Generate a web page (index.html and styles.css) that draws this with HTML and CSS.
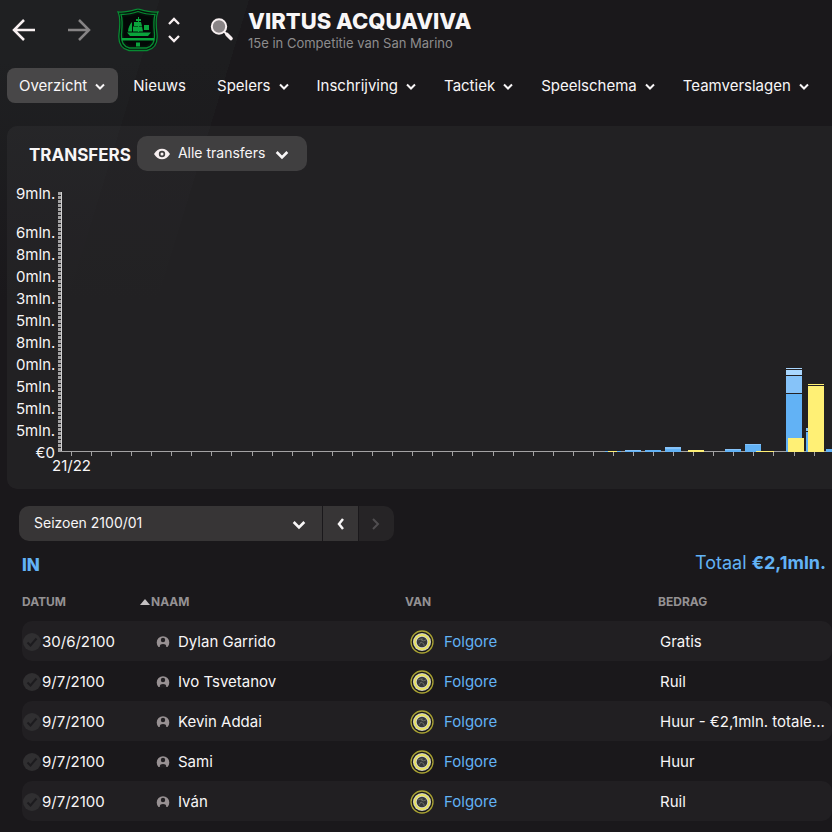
FILE: index.html
```html
<!DOCTYPE html>
<html lang="nl">
<head>
  <meta charset="UTF-8" />
  <meta name="viewport" content="width=device-width, initial-scale=1" />
  <title>Virtus Acquaviva - Transfers</title>
  <link rel="stylesheet" href="styles.css">
</head>
<body>
  <!-- shared icons -->
  <svg class="sprite" aria-hidden="true">
    <symbol id="chevron" viewBox="0 0 12 12"><path d="M2 4.500l4 4 4-4" fill="none" stroke="currentColor" stroke-width="2"/></symbol>
    <symbol id="check" viewBox="0 0 18 18"><circle cx="9" cy="9" r="9" fill="#302f31"/><path d="M4.500 9.500l3 3 6-7" fill="none" stroke="#1c1b1e" stroke-width="2"/></symbol>
    <symbol id="person" viewBox="0 0 14 14"><path d="M2.500 12A6.300 6.300 0 1 1 11.500 12z" fill="#989193"/><circle cx="7" cy="5" r="2.200" fill="#211f22"/><path d="M3.800 12.500V11Q4 9 7 9t3.200 2v1.500z" fill="#211f22"/></symbol>
    <symbol id="folgore" viewBox="0 0 24 24">
      <circle cx="12" cy="12" r="11" fill="#17161a" stroke="#a9a233" stroke-width="1.300"/>
      <circle cx="12" cy="12" r="9" fill="#d5d3b8"/>
      <circle cx="12" cy="12" r="7" fill="#d5d3c6" stroke="#e9e251" stroke-width="1.500"/>
      <circle cx="12" cy="12" r="5.300" fill="#363839"/>
      <path d="M8 10l3-1 2 2 3-1M9 15l2-3 3 2M12 8v3M14 14v2" fill="none" stroke="#73766f" stroke-width=".8"/>
    </symbol>
  </svg>

  <header class="header">
    <button class="icon-btn back" aria-label="Terug">
      <svg width="24" height="24" viewBox="0 0 24 24"><path d="M23 12H3M12 2L2 12l10 10" fill="none" stroke="currentColor" stroke-width="2.500"/></svg>
    </button>
    <button class="icon-btn forward" aria-label="Vooruit">
      <svg width="24" height="24" viewBox="0 0 24 24"><path d="M1 12h20M12 2l10 10-10 10" fill="none" stroke="currentColor" stroke-width="2.500"/></svg>
    </button>
    <svg class="crest" width="42" height="44" viewBox="0 0 42 44">
      <path d="M1 4C8 5 14 3 21 1c7 2 13 4 20 3-3 6-2 14-1 22 1 10-3 15-10 16.500H12C5 41 1 36 2 26 3 18 4 10 1 4z" fill="#06110b" stroke="#078a32" stroke-width="1.300"/>
      <path d="M4 6.500c7 0 12-1 17-3 5 2 10 3 17 3-2 7-1 14-.5 20 .5 8-2 12-8 13.500h-17C6 38.500 4 34 4.500 26.500 5 20 6 13 4 6.500z" fill="none" stroke="#078a32" stroke-width="1.300"/>
      <path d="M6.500 9C12 8.500 17 7.500 21 6c4 1.500 9 2.500 14.500 3-1 6-1 11-.5 18 .3 6-2 9.500-7 10.500H14c-5-1-7-4.500-7-10.500.5-7 .5-12-.5-18z" fill="#030806"/>
      <path d="M5 30h32v2.500H5zM19 34.500h4v4h-4z" fill="#0aa53c"/>
      <path d="M10 24.500h24l-3 3.500H13zM15 14c-2 2-4 6-4 9.500h4zM19 11h5v2h-5zM17 14h7l1 4h-8zM16 18.500h9l1 5H16zM27 17h5v5h-5zM21 9h1v15h-1z" fill="#0aa53c"/>
    </svg>
    <div class="switcher">
      <button class="icon-btn" aria-label="Vorige club"><svg width="14" height="10" viewBox="0 0 14 10"><path d="M2 8l5-5 5 5" fill="none" stroke="currentColor" stroke-width="2.300"/></svg></button>
      <button class="icon-btn" aria-label="Volgende club"><svg width="14" height="10" viewBox="0 0 14 10"><path d="M2 2l5 5 5-5" fill="none" stroke="currentColor" stroke-width="2.300"/></svg></button>
    </div>
    <button class="icon-btn search" aria-label="Zoeken">
      <svg width="24" height="24" viewBox="0 0 24 24"><circle cx="9" cy="8.500" r="7.200" fill="#898486" stroke="#f8f0f1" stroke-width="2"/><path d="M14 13.500l3 3" stroke="#f8f0f1" stroke-width="2"/><path d="M17 16.500l4 4" stroke="#f8f0f1" stroke-width="3.600" stroke-linecap="round"/></svg>
    </button>
    <div class="club">
      <h1>VIRTUS ACQUAVIVA</h1>
      <p>15e in Competitie van San Marino</p>
    </div>
  </header>

  <nav class="tabs">
    <button class="tab active">Overzicht <svg class="chev"><use href="#chevron"/></svg></button>
    <button class="tab plain">Nieuws</button>
    <button class="tab">Spelers <svg class="chev"><use href="#chevron"/></svg></button>
    <button class="tab">Inschrijving <svg class="chev"><use href="#chevron"/></svg></button>
    <button class="tab">Tactiek <svg class="chev"><use href="#chevron"/></svg></button>
    <button class="tab">Speelschema <svg class="chev"><use href="#chevron"/></svg></button>
    <button class="tab">Teamverslagen <svg class="chev"><use href="#chevron"/></svg></button>
  </nav>

  <section class="panel">
    <div class="panel-head">
      <h2>TRANSFERS</h2>
      <div class="filter">
        <svg width="16" height="12" viewBox="0 0 16 12"><path d="M0 6C4-1 12-1 16 6 12 13 4 13 0 6z" fill="#f8f0f1"/><circle cx="8" cy="6" r="3.200" fill="#403f40"/><circle cx="8" cy="6" r="1.500" fill="#f8f0f1"/></svg>
        <select aria-label="Transfers filteren">
          <option>Alle transfers</option>
        </select>
        <svg class="select-chev"><use href="#chevron"/></svg>
      </div>
    </div>
    <div class="chart">
      <ul class="y-labels">
        <li class="top">9mln.</li>
        <li>6mln.</li>
        <li>8mln.</li>
        <li>0mln.</li>
        <li>3mln.</li>
        <li>5mln.</li>
        <li>8mln.</li>
        <li>0mln.</li>
        <li>5mln.</li>
        <li>5mln.</li>
        <li>5mln.</li>
        <li>€0</li>
      </ul>
      <div class="plot">
        <svg class="bars" role="img" aria-label="Transfers per seizoen">
          <defs>
            <pattern id="y-ticks" width="3" height="4" patternUnits="userSpaceOnUse"><rect width="3" height="3" fill="#a3a2a3"/></pattern>
          </defs>
          <rect width="3" height="260" fill="url(#y-ticks)"/>
          <path d="M3 0h1v259h-1z" fill="#d2d1d2"/>
          <path d="M0 259h2000v1H0z" fill="#a3a2a3"/>
          <path d="M13.500 260v4m20-4v4m20-4v4m20-4v4m20-4v4m20-4v4m20-4v4m20-4v4m20-4v4m21-4v4m20-4v4m20-4v4m20-4v4m20-4v4m20-4v4m20-4v4m20-4v4m20-4v4m20-4v4m20-4v4m20-4v4m21-4v4m20-4v4m20-4v4m20-4v4m20-4v4m20-4v4m20-4v4m20-4v4m20-4v4m20-4v4m20-4v4m20-4v4m20-4v4m20-4v4m20-4v4m21-4v4m20-4v4" fill="none" stroke="#a3a2a3"/>
          <!-- incoming: blue -->
          <path d="M547 259h16v1h-16zM567 258h16v2h-16zM587 258h16v2h-16zM607 257h16v3h-16zM667 258h16v2h-16zM687 253h16v7h-16zM728 202h16v58h-16zM748 240h16v20h-16zM768 257h16v3h-16z" fill="#62b2f5"/>
          <path d="M567 258h16v1h-16zM607 255h16v2h-16zM667 257h16v1h-16zM687 252h16v1h-16zM728 184h16v17h-16zM748 236h16v3h-16z" fill="#86c3f9"/>
          <path d="M728 178h16v5h-16zM728 176h16v1h-16z" fill="#a9d7ff"/>
          <!-- outgoing: yellow -->
          <path d="M630 258h16v2h-16zM550 259h9v1h-9zM698 259h18v1h-18zM730 246h16v14h-16zM750 192h16v1h-16zM750 194h16v66h-16z" fill="#fff075"/>
          <path d="M728 177h16v1h-16zM728 183h16v1h-16zM728 201h16v1h-16zM750 193h16v1h-16z" fill="#232124"/>
        </svg>
        <span class="x-label">21/22</span>
      </div>
    </div>
  </section>

  <section class="season">
    <div class="season-bar">
      <div class="season-pick">
        <select aria-label="Seizoen">
          <option>Seizoen 2100/01</option>
        </select>
        <svg class="select-chev"><use href="#chevron"/></svg>
      </div>
      <button class="step" aria-label="Vorig seizoen"><svg width="12" height="14" viewBox="0 0 12 14"><path d="M8 2L4 7l4 5" fill="none" stroke="currentColor" stroke-width="2.500"/></svg></button>
      <button class="step next" aria-label="Volgend seizoen" disabled><svg width="12" height="14" viewBox="0 0 12 14"><path d="M2 2l5 5-5 5" fill="none" stroke="currentColor" stroke-width="2"/></svg></button>
    </div>
    <div class="summary">
      <h3>IN</h3>
      <p>Totaal <strong>€2,1mln.</strong></p>
    </div>
    <table class="transfers">
      <thead>
        <tr>
          <th class="date">DATUM</th>
          <th class="name" aria-sort="ascending"><svg width="10" height="6" viewBox="0 0 10 6"><path d="M0 6l5-6 5 6z" fill="#c4c0c2"/></svg>NAAM</th>
          <th class="from">VAN</th>
          <th class="fee">BEDRAG</th>
        </tr>
      </thead>
      <tbody>
        <tr>
          <td><div class="cell"><svg class="check"><use href="#check"/></svg>30/6/2100</div></td>
          <td><div class="cell player"><svg class="person"><use href="#person"/></svg>Dylan Garrido</div></td>
          <td><div class="cell team"><svg class="badge"><use href="#folgore"/></svg><a href="#">Folgore</a></div></td>
          <td class="amount">Gratis</td>
        </tr>
        <tr>
          <td><div class="cell"><svg class="check"><use href="#check"/></svg>9/7/2100</div></td>
          <td><div class="cell player"><svg class="person"><use href="#person"/></svg>Ivo Tsvetanov</div></td>
          <td><div class="cell team"><svg class="badge"><use href="#folgore"/></svg><a href="#">Folgore</a></div></td>
          <td class="amount">Ruil</td>
        </tr>
        <tr>
          <td><div class="cell"><svg class="check"><use href="#check"/></svg>9/7/2100</div></td>
          <td><div class="cell player"><svg class="person"><use href="#person"/></svg>Kevin Addai</div></td>
          <td><div class="cell team"><svg class="badge"><use href="#folgore"/></svg><a href="#">Folgore</a></div></td>
          <td class="amount">Huur - €2,1mln. totale...</td>
        </tr>
        <tr>
          <td><div class="cell"><svg class="check"><use href="#check"/></svg>9/7/2100</div></td>
          <td><div class="cell player"><svg class="person"><use href="#person"/></svg>Sami</div></td>
          <td><div class="cell team"><svg class="badge"><use href="#folgore"/></svg><a href="#">Folgore</a></div></td>
          <td class="amount">Huur</td>
        </tr>
        <tr>
          <td><div class="cell"><svg class="check"><use href="#check"/></svg>9/7/2100</div></td>
          <td><div class="cell player"><svg class="person"><use href="#person"/></svg>Iván</div></td>
          <td><div class="cell team"><svg class="badge"><use href="#folgore"/></svg><a href="#">Folgore</a></div></td>
          <td class="amount">Ruil</td>
        </tr>
      </tbody>
    </table>
  </section>
</body>
</html>
```
FILE: styles.css
```css
* {
  box-sizing: border-box;
}
body {
  margin: 0;
  background-color: #1a181b;
  background-image:
    linear-gradient(rgba(26, 24, 27, 0) 60px, #1a181b 300px),
    linear-gradient(107deg, #1f2022 0, #1f2022 32%, #1d1d1f 32%, #1d1d1f 50%, #1a181b 50%);
  background-repeat: no-repeat;
  background-size: 400px 320px;
  color: #f8f6f7;
  font-family: Inter, "Liberation Sans", sans-serif;
  font-size: 15px;
  line-height: 20px;
}
h1, h2, h3, p, ul {
  margin: 0;
  padding: 0;
}
button, select {
  font: inherit;
  color: inherit;
  background: none;
  border: 0;
  padding: 0;
  cursor: pointer;
}
select {
  appearance: none;
}
svg {
  display: block;
  flex: none;
}
.sprite {
  position: absolute;
  width: 0;
  height: 0;
}

/* top bar */
.header {
  display: flex;
  align-items: center;
  height: 60px;
  padding-left: 12px;
}
.icon-btn {
  color: #f8f0f1;
}
.forward {
  color: #868485;
  margin-left: 31px;
}
.crest {
  margin-left: 26px;
}
.switcher {
  display: flex;
  flex-direction: column;
  gap: 8px;
  margin-left: 8px;
}
.search {
  margin-left: 29px;
}
.club {
  margin-left: 14px;
  padding-top: 2px;
}
.club h1 {
  font-size: 22px;
  line-height: 24px;
  font-weight: 800;
}
.club p {
  font-size: 13px;
  color: #8d8c8d;
}

/* tabs */
.tabs {
  display: flex;
  gap: 3px;
  padding: 8px 7px 0;
}
.tab {
  display: flex;
  align-items: center;
  gap: 7px;
  height: 35px;
  padding: 0 12px;
  border-radius: 8px;
  white-space: nowrap;
}
.tab.plain {
  padding-right: 16px;
}
.tab.active {
  background: #484748;
}
.chev {
  width: 12px;
  height: 12px;
}

/* chart panel */
.panel {
  margin: 23px 0 0 7px;
  height: 363px;
  background: rgba(255, 255, 255, 0.04);
  border-radius: 10px 0 0 10px;
}
.panel-head {
  display: flex;
  align-items: center;
  gap: 6px;
  padding: 10px 0 0 22px;
}
.panel-head h2 {
  padding-top: 2px;
  font-size: 17px;
  font-weight: 700;
}
.filter {
  display: flex;
  align-items: center;
  gap: 8px;
  height: 35px;
  padding: 0 17px;
  background: #403f40;
  border-radius: 10px;
  font-size: 14px;
}
.filter select, .season-pick select {
  padding-bottom: 2px;
}
.select-chev {
  width: 16px;
  height: 16px;
  pointer-events: none;
}
.chart {
  display: flex;
  padding: 12px 0 0 9px;
}
.y-labels {
  width: 39px;
  list-style: none;
  text-align: right;
  line-height: 22px;
  white-space: nowrap;
}
.y-labels .top {
  margin-bottom: 17px;
}
.plot {
  flex: 1;
  min-width: 0;
  margin-left: 3px;
  padding-top: 9px;
}
.bars {
  width: 100%;
  height: 264px;
}
.x-label {
  display: inline-block;
  margin-left: -6px;
}

/* season selector */
.season {
  padding: 17px 0 0 19px;
}
.season-bar {
  display: flex;
  gap: 1px;
}
.season-pick {
  display: flex;
  align-items: center;
  width: 303px;
  height: 35px;
  padding: 0 15px;
  background: #373536;
  border-radius: 10px 0 0 10px;
  font-size: 14px;
}
.season-pick select {
  flex: 1;
}
.step {
  display: flex;
  align-items: center;
  justify-content: center;
  width: 35px;
  height: 35px;
  background: #373536;
}
.step.next {
  background: #262426;
  color: #504e50;
  border-radius: 0 10px 10px 0;
}
.summary {
  display: flex;
  align-items: center;
  justify-content: space-between;
  height: 44px;
  padding: 0 6px 0 3px;
  color: #62b2f5;
}
.summary h3 {
  padding-top: 4px;
  font-size: 17px;
  font-weight: 800;
}
.summary p {
  font-size: 18px;
}

/* transfer list */
.transfers {
  width: calc(100% - 3px);
  margin-left: 3px;
  table-layout: fixed;
  border-collapse: collapse;
}
th {
  height: 36px;
  padding: 0 0 3px;
  color: #949193;
  font-size: 12px;
  font-weight: 700;
  text-align: left;
}
th svg {
  display: inline-block;
  margin-right: 1px;
  vertical-align: 1px;
}
.date {
  width: 118px;
}
.name {
  width: 265px;
}
.from {
  width: 253px;
}
td {
  height: 40px;
  padding: 1px 0 0;
  white-space: nowrap;
}
tbody tr:nth-child(odd) td {
  background: #211f22;
}
tbody td:first-child {
  border-radius: 10px 0 0 10px;
}
tbody td:last-child {
  border-radius: 0 10px 10px 0;
}
.cell {
  display: flex;
  align-items: center;
}
.check {
  width: 18px;
  height: 18px;
  margin: 0 1px;
}
.player {
  gap: 8px;
  padding-left: 16px;
}
.person {
  width: 14px;
  height: 14px;
}
.team {
  gap: 10px;
  padding-left: 5px;
}
.badge {
  width: 24px;
  height: 24px;
}
.team a {
  color: #62b2f5;
  text-decoration: none;
}
.amount {
  padding-left: 2px;
}
```
